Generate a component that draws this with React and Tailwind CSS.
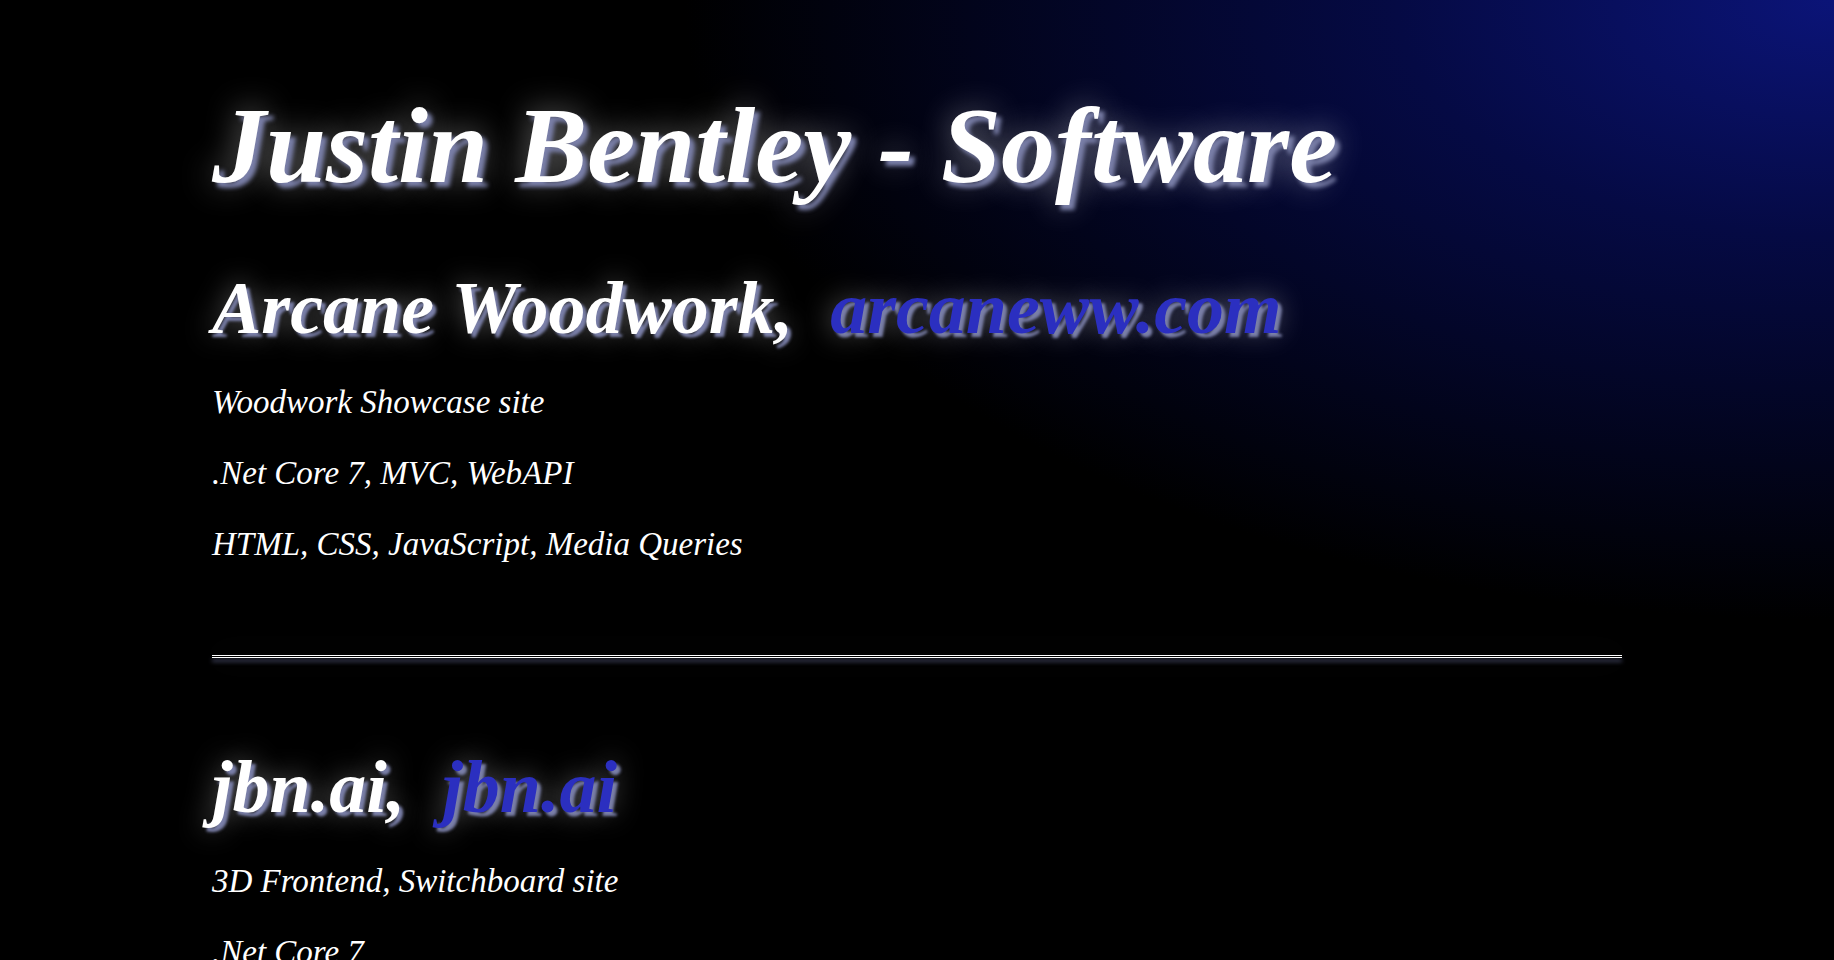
const projects = [
  {
    name: 'Arcane Woodwork',
    url: 'arcaneww.com',
    details: ['Woodwork Showcase site', '.Net Core 7, MVC, WebAPI', 'HTML, CSS, JavaScript, Media Queries'],
  },
  {
    name: 'jbn.ai',
    url: 'jbn.ai',
    details: ['3D Frontend, Switchboard site', '.Net Core 7', 'Three.js, WebGL, JavaScript'],
  },
];

function Project({ project, last }) {
  return (
    <section>
      <h2 className="text-[74px] leading-[74px] font-bold text-white [text-shadow:4px_4px_3px_#7a7fa8,0_0_28px_rgba(255,255,255,0.42)]">
        {project.name},&nbsp;{' '}
        <a href={`https://${project.url}`} className="text-[#2b2fc0]">
          {project.url}
        </a>
      </h2>
      <div className="mt-[37px] flex flex-col gap-[31px]">
        {project.details.map((line) => (
          <p key={line} className="text-[33px] leading-[40px] text-white">
            {line}
          </p>
        ))}
      </div>
      {!last && (
        <hr className="mt-[91px] mb-[92px] h-[3px] border-0 border-y border-white bg-transparent shadow-[0_4px_4px_rgba(110,115,160,0.55),0_0_32px_rgba(255,255,255,0.1)]" />
      )}
    </section>
  );
}

export default function App() {
  return (
    <div className="min-h-screen bg-black bg-[radial-gradient(ellipse_1150px_620px_at_100%_0%,#0b1478_0%,#050a44_38%,#000_100%)] italic font-['Liberation_Serif',serif]">
      <main className="mx-[212px] pt-[92px] pb-20">
        <h1 className="mb-[71px] text-[108px] leading-[108px] font-bold text-white [text-shadow:5px_5px_4px_#7a7fa8,0_0_32px_rgba(255,255,255,0.45)]">
          Justin Bentley - Software
        </h1>
        {projects.map((p, i) => (
          <Project key={p.name} project={p} last={i === projects.length - 1} />
        ))}
      </main>
    </div>
  );
}
